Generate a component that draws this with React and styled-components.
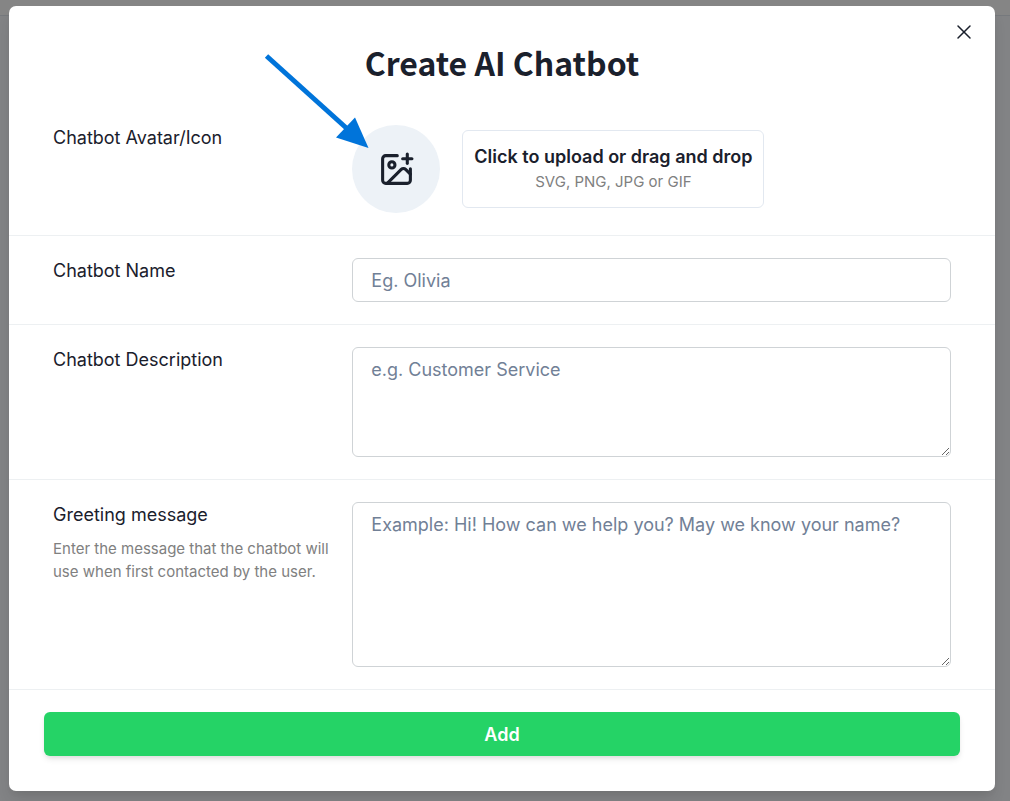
import React, { useRef, useState } from "react";
import styled, { createGlobalStyle } from "styled-components";
import { ImagePlus, X } from "lucide-react";

const GlobalStyle = createGlobalStyle`
  *, *::before, *::after {
    box-sizing: border-box;
  }

  body {
    margin: 0;
    background: #fafcff;
    color: #1a202c;
    font-family: Inter, "Liberation Sans", sans-serif;
  }

  button, input, textarea {
    font-family: inherit;
    color: inherit;
  }
`;

const PageWrapper = styled.div`
  min-height: 100vh;
  display: grid;

  > * {
    grid-area: 1 / 1;
  }
`;

const PageBar = styled.div`
  height: 16px;
  background: #fff;
  border-bottom: 1px solid #e2e8f0;
`;

const Overlay = styled.div`
  padding: 6px 15px 10px 9px;
  background: rgba(0, 0, 0, 0.48);
`;

const Modal = styled.section`
  position: relative;
  background: #fff;
  border-radius: 7px;
  box-shadow: 0 10px 15px -3px rgba(0, 0, 0, 0.1), 0 4px 6px -2px rgba(0, 0, 0, 0.05);
`;

const Title = styled.h2`
  margin: 0;
  padding: 34px 44px 19px;
  font-family: "Segoe UI", "Noto Sans CJK SC", "Open Sans", sans-serif;
  font-size: 32px;
  font-weight: 700;
  line-height: 44px;
  text-align: center;
`;

const CloseButton = styled.button`
  position: absolute;
  top: 8px;
  right: 13px;
  width: 36px;
  height: 36px;
  display: flex;
  align-items: center;
  justify-content: center;
  padding: 0;
  border: 0;
  border-radius: 6px;
  background: transparent;
  cursor: pointer;
`;

const Row = styled.div`
  display: grid;
  grid-template-columns: minmax(0, 1fr) minmax(0, 2fr);
  padding: 22px 44px;
  border-bottom: 1px solid #edf0f2;
`;

const Label = styled.label`
  display: block;
  font-size: 18px;
  font-weight: 400;
  line-height: 26px;
`;

const HelpText = styled.p`
  margin: 9px 0 0;
  padding-right: 8px;
  font-size: 15px;
  line-height: 23px;
  color: #808080;
`;

const UploadGroup = styled.div`
  display: flex;
  align-items: center;
  gap: 22px;
`;

const Avatar = styled.div`
  position: relative;
  flex: 0 0 88px;
  height: 88px;
  display: flex;
  align-items: center;
  justify-content: center;
  border-radius: 50%;
  background: #edf2f7;
`;

const Arrow = styled.svg`
  position: absolute;
  top: -75px;
  left: -92px;
  pointer-events: none;
`;

const DropZone = styled.button`
  padding: 13px 11px;
  border: 1px solid #e2e8f0;
  border-radius: 6px;
  background: #fff;
  text-align: center;
  cursor: pointer;

  strong {
    display: block;
    font-size: 18px;
    font-weight: 600;
    line-height: 26px;
  }

  span {
    display: block;
    font-size: 15px;
    line-height: 24px;
    color: #808080;
  }
`;

const Input = styled.input`
  display: block;
  width: 100%;
  height: ${(p) => p.$height}px;
  padding: 9px 18px 8px;
  border: 1px solid #cfd3d6;
  border-radius: 6px;
  background: #fff;
  font-size: 18px;
  line-height: 26px;

  &::placeholder {
    color: #718096;
    opacity: 1;
  }
`;

const Footer = styled.div`
  padding: 22px 35px 35px;
`;

const SubmitButton = styled.button`
  display: block;
  width: 100%;
  height: 44px;
  border: 0;
  border-radius: 6px;
  background: #25d366;
  box-shadow: 0 4px 6px -1px rgba(0, 0, 0, 0.1), 0 2px 4px -1px rgba(0, 0, 0, 0.06);
  color: #fff;
  font-size: 18px;
  font-weight: 600;
  cursor: pointer;
`;

export default function App() {
  const fileRef = useRef(null);
  const [form, setForm] = useState({ name: "", description: "", greeting: "" });

  const handleChange = (e) => setForm({ ...form, [e.target.name]: e.target.value });

  return (
    <>
      <GlobalStyle />
      <PageWrapper>
        <PageBar />
        <Overlay>
          <Modal role="dialog" aria-labelledby="title">
            <Title id="title">Create AI Chatbot</Title>
            <CloseButton type="button" aria-label="Close">
              <X size={24} strokeWidth={1.5} />
            </CloseButton>

            <form onSubmit={(e) => e.preventDefault()}>
              <Row>
                <Label htmlFor="avatar">Chatbot Avatar/Icon</Label>
                <UploadGroup>
                  <Avatar>
                    <ImagePlus size={37} strokeWidth={2} />
                    <Arrow width="110" height="100" viewBox="0 0 110 100" aria-hidden="true">
                      <path d="M6.5 6 L88 79.5" stroke="#0074da" strokeWidth="5" />
                      <path d="M95 67.5 L108.5 98 L76 87.5 Z" fill="#0074da" />
                    </Arrow>
                  </Avatar>
                  <DropZone id="avatar" type="button" onClick={() => fileRef.current.click()}>
                    <strong>Click to upload or drag and drop</strong>
                    <span>SVG, PNG, JPG or GIF</span>
                  </DropZone>
                  <input ref={fileRef} type="file" accept="image/*" aria-label="Avatar file" hidden />
                </UploadGroup>
              </Row>

              <Row>
                <Label htmlFor="name">Chatbot Name</Label>
                <Input
                  id="name"
                  name="name"
                  $height={44}
                  placeholder="Eg. Olivia"
                  value={form.name}
                  onChange={handleChange}
                />
              </Row>

              <Row>
                <Label htmlFor="description">Chatbot Description</Label>
                <Input
                  as="textarea"
                  id="description"
                  name="description"
                  $height={110}
                  placeholder="e.g. Customer Service"
                  value={form.description}
                  onChange={handleChange}
                />
              </Row>

              <Row>
                <div>
                  <Label htmlFor="greeting">Greeting message</Label>
                  <HelpText>
                    Enter the message that the chatbot will use when first contacted by the user.
                  </HelpText>
                </div>
                <Input
                  as="textarea"
                  id="greeting"
                  name="greeting"
                  $height={165}
                  placeholder="Example: Hi! How can we help you? May we know your name?"
                  value={form.greeting}
                  onChange={handleChange}
                />
              </Row>

              <Footer>
                <SubmitButton type="submit">Add</SubmitButton>
              </Footer>
            </form>
          </Modal>
        </Overlay>
      </PageWrapper>
    </>
  );
}
